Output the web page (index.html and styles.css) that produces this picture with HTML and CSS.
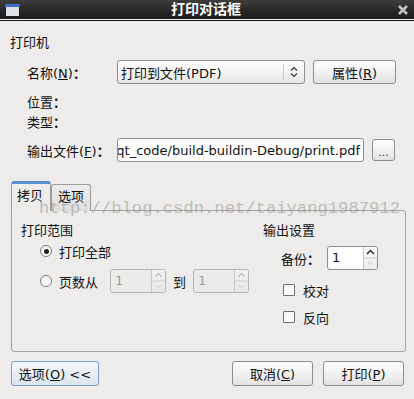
FILE: index.html
```html
<!DOCTYPE html>
<html lang="zh-CN">
<head>
  <meta charset="UTF-8" />
  <title>打印对话框</title>
  <link rel="stylesheet" href="styles.css">
</head>
<body>
  <div class="titlebar">
    <svg class="win-icon" width="15" height="13" viewBox="0 0 15 13">
      <rect x="0.5" y="0.5" width="14" height="12" fill="#dfe3e6" stroke="#1c1c1c"/>
      <rect x="0" y="0" width="15" height="3" fill="#3c6fc8"/>
    </svg>
    <div class="title">打印对话框</div>
    <svg class="close" width="10" height="10" viewBox="0 0 10 10">
      <path d="M1 1 L9 9 M9 1 L1 9" stroke="#c4c4c4" stroke-width="2.6"/>
    </svg>
  </div>
  <div class="title-lines"></div>

  <div class="dialog">
    <div class="section-title">打印机</div>
    <div class="form">
      <div class="row row-name">
        <label class="lbl">名称(<u>N</u>)<span class="colon">：</span></label>
        <div class="combo">
          <span class="combo-text">打印到文件(PDF)</span>
          <span class="combo-arrow">
            <svg width="8" height="12" viewBox="0 0 8 12">
              <polyline points="1,4.5 4,1.5 7,4.5" fill="none" stroke="#333" stroke-width="1.2"/>
              <polyline points="1,7.5 4,10.5 7,7.5" fill="none" stroke="#333" stroke-width="1.2"/>
            </svg>
          </span>
        </div>
        <button class="btn btn-props">属性(<u>R</u>)</button>
      </div>
      <div class="row-info"><span class="lbl">位置<span class="colon">：</span></span></div>
      <div class="row-info"><span class="lbl">类型<span class="colon">：</span></span></div>
      <div class="row row-file">
        <label class="lbl">输出文件(<u>F</u>)<span class="colon">：</span></label>
        <div class="lineedit"><span class="path">qt_code/build-buildin-Debug/print.pdf</span></div>
        <button class="btn btn-browse">...</button>
      </div>
    </div>

    <div class="tabs">
      <div class="tab active">拷贝</div>
      <div class="tab">选项</div>
    </div>
    <div class="panel">
      <div class="watermark">http://blog.csdn.net/taiyang1987912</div>
      <div class="col col-left">
        <div class="group-title">打印范围</div>
        <div class="opt-row first">
          <span class="radio checked"></span>
          <span>打印全部</span>
        </div>
        <div class="opt-row second">
          <span class="radio"></span>
          <span class="range-lbl">页数从</span>
          <div class="spin disabled">
            <span class="spin-val">1</span>
            <span class="spin-btns">
              <svg width="13" height="22" viewBox="0 0 13 22">
                <line x1="0" y1="11" x2="13" y2="11" stroke="#d0d0d0"/>
                <polyline points="3.5,6.5 6.5,3.5 9.5,6.5" fill="none" stroke="#b4b4b4" stroke-width="1.1"/>
                <polyline points="4,15 6.5,17.5 9,15" fill="none" stroke="#c4c4c4" stroke-width="1"/>
              </svg>
            </span>
          </div>
          <span class="to-lbl">到</span>
          <div class="spin disabled">
            <span class="spin-val">1</span>
            <span class="spin-btns">
              <svg width="13" height="22" viewBox="0 0 13 22">
                <line x1="0" y1="11" x2="13" y2="11" stroke="#d0d0d0"/>
                <polyline points="3.5,6.5 6.5,3.5 9.5,6.5" fill="none" stroke="#b4b4b4" stroke-width="1.1"/>
                <polyline points="4,15 6.5,17.5 9,15" fill="none" stroke="#c4c4c4" stroke-width="1"/>
              </svg>
            </span>
          </div>
        </div>
      </div>
      <div class="col col-right">
        <div class="group-title">输出设置</div>
        <div class="copies-row">
          <span>备份<span class="colon">：</span></span>
          <div class="spin copies">
            <span class="spin-val">1</span>
            <span class="spin-btns">
              <svg width="13" height="22" viewBox="0 0 13 22">
                <line x1="0" y1="11" x2="13" y2="11" stroke="#c8c8c8"/>
                <polyline points="3,7 6.5,3.5 10,7" fill="none" stroke="#222" stroke-width="1.4"/>
                <polyline points="4,15 6.5,17.5 9,15" fill="none" stroke="#bdbdbd" stroke-width="1"/>
              </svg>
            </span>
          </div>
        </div>
        <div class="check-row collate">
          <span class="checkbox"></span>
          <span>校对</span>
        </div>
        <div class="check-row reverse">
          <span class="checkbox"></span>
          <span>反向</span>
        </div>
      </div>
    </div>

    <div class="buttons">
      <button class="btn btn-options">选项(<u>O</u>) &lt;&lt;</button>
      <div class="spacer"></div>
      <button class="btn btn-action">取消(<u>C</u>)</button>
      <button class="btn btn-action">打印(<u>P</u>)</button>
    </div>
  </div>
</body>
</html>
```

FILE: styles.css
```css
body {
  margin: 0;
  width: 414px;
  height: 399px;
  overflow: hidden;
  background: #edecea;
  font-family: "DejaVu Sans", "Noto Sans CJK SC", sans-serif;
  font-size: 13px;
  color: #111;
}
.titlebar {
  height: 19px;
  display: flex;
  align-items: center;
  background: linear-gradient(#3d3d3d, #262626 60%, #1b1b1b);
  padding: 0 6px 0 5px;
}
.win-icon {
  display: block;
  margin-top: 1px;
}
.title {
  flex: 1;
  text-align: center;
  color: white;
  font-weight: bold;
  font-size: 14px;
  line-height: 19px;
  margin-right: 6px;
}
.close {
  display: block;
}
.title-lines {
  height: 1px;
  background: #f4f4f4;
  border-bottom: 1px solid #111;
}
.dialog {
  padding: 0 8px 0 10px;
}
.section-title {
  margin-top: 14px;
  line-height: 16px;
}
.form {
  padding-left: 17px;
}
.row {
  display: flex;
  align-items: center;
}
.lbl {
  width: 90px;
  flex: none;
}
.colon {
  font-family: "Noto Sans CJK TC", sans-serif;
  font-weight: bold;
}
.row-name {
  margin-top: 9px;
  height: 24px;
}
.row-info {
  height: 20px;
  line-height: 20px;
}
.row-name + .row-info {
  margin-top: 8px;
}
.row-file {
  margin-top: 6px;
  height: 24px;
}
.btn {
  font: inherit;
  color: #111;
  border: 1px solid #8c8c8c;
  border-radius: 3px;
  background: linear-gradient(#fefefe, #f1f1f1 50%, #e2e2e2);
  padding: 0;
  box-sizing: border-box;
}
.combo {
  width: 188px;
  height: 24px;
  box-sizing: border-box;
  border: 1px solid #8c8c8c;
  border-radius: 3px;
  background: linear-gradient(#fefefe, #f3f3f3 50%, #e6e6e6);
  display: flex;
  align-items: center;
}
.combo-text {
  flex: 1;
  padding-left: 3px;
}
.combo-arrow {
  width: 19px;
  height: 16px;
  border-left: 1px solid #c8c8c8;
  display: flex;
  align-items: center;
  justify-content: center;
  margin-right: 1px;
}
.combo-arrow svg {
  display: block;
}
.btn-props {
  margin-left: 8px;
  width: 83px;
  height: 24px;
}
.lineedit {
  width: 247px;
  height: 24px;
  box-sizing: border-box;
  border: 1px solid #8c8c8c;
  border-radius: 3px;
  background: white;
  overflow: hidden;
  display: flex;
  align-items: center;
  justify-content: flex-end;
  padding-right: 3px;
  white-space: nowrap;
}
.btn-browse {
  margin-left: 8px;
  width: 23px;
  height: 22px;
  font-size: 11px;
  line-height: 22px;
  padding-top: 2px;
  color: #333;
}
.tabs {
  display: flex;
  align-items: flex-end;
  margin-top: 20px;
  margin-left: 1px;
  height: 29px;
  margin-bottom: -1px;
  position: relative;
  z-index: 1;
}
.tab {
  width: 40px;
  box-sizing: border-box;
  height: 27px;
  border: 1px solid #9c9c9c;
  border-bottom: none;
  border-radius: 3px 3px 0 0;
  background: linear-gradient(#ececec, #dedede);
  padding-left: 6px;
  line-height: 24px;
}
.tab.active {
  height: 30px;
  background: #edecea;
  border-top: 3px solid #5a8ed2;
  padding-left: 5px;
}
.panel {
  position: relative;
  margin-left: 1px;
  width: 395px;
  height: 142px;
  box-sizing: border-box;
  border: 1px solid #a2a2a2;
  border-radius: 0 3px 3px 3px;
  display: flex;
  padding: 12px 0 0 9px;
}
.watermark {
  position: absolute;
  left: 27px;
  top: -12px;
  font-family: "Liberation Mono", monospace;
  font-size: 17.2px;
  color: rgba(145, 145, 145, 0.55);
  white-space: nowrap;
  z-index: 2;
  pointer-events: none;
}
.col-left {
  width: 242px;
}
.group-title {
  line-height: 16px;
}
.opt-row {
  display: flex;
  align-items: center;
  padding-left: 19px;
}
.opt-row.first {
  margin-top: 2px;
  height: 20px;
}
.opt-row.second {
  margin-top: 8px;
  height: 24px;
}
.radio {
  width: 12px;
  height: 12px;
  box-sizing: border-box;
  border: 1px solid #7c7c7c;
  border-radius: 50%;
  background: linear-gradient(#f2f2f2, #ffffff);
  margin-right: 7px;
  display: flex;
  align-items: center;
  justify-content: center;
}
.radio.checked::after {
  content: "";
  width: 5px;
  height: 5px;
  border-radius: 50%;
  background: #222;
}
.range-lbl {
  margin-right: 12px;
}
.to-lbl {
  margin: 0 7px;
}
.spin {
  width: 56px;
  height: 24px;
  box-sizing: border-box;
  border: 1px solid #8c8c8c;
  border-radius: 3px;
  background: white;
  display: flex;
}
.spin.disabled {
  background: #ecebe9;
  border-color: #b4b4b4;
  color: #9a9a9a;
}
.spin-val {
  flex: 1;
  padding-left: 4px;
  line-height: 22px;
}
.spin-btns {
  width: 13px;
  border-left: 1px solid #c8c8c8;
  background: linear-gradient(#fbfbfb, #ececec);
  border-radius: 0 2px 2px 0;
}
.spin.disabled .spin-btns {
  background: linear-gradient(#f2f2f2, #e8e8e8);
}
.spin-btns svg {
  display: block;
}
.copies-row {
  display: flex;
  align-items: center;
  padding-left: 18px;
  margin-top: 7px;
  height: 24px;
}
.copies-row > span {
  margin-right: 7px;
}
.spin.copies {
  width: 51px;
}
.check-row {
  display: flex;
  align-items: center;
  padding-left: 20px;
  height: 20px;
}
.check-row.collate {
  margin-top: 10px;
}
.check-row.reverse {
  margin-top: 7px;
}
.checkbox {
  width: 12px;
  height: 12px;
  box-sizing: border-box;
  border: 1px solid #6e6e6e;
  border-radius: 1px;
  background: linear-gradient(#f4f4f4, #ffffff);
  margin-right: 8px;
}
.buttons {
  display: flex;
  margin-top: 9px;
  margin-left: 1px;
  padding-right: 2px;
  height: 25px;
}
.spacer {
  flex: 1;
}
.btn-options {
  width: 88px;
  height: 25px;
  border-color: #7b9ccb;
  background: linear-gradient(#f6f9fc, #e8eef4 50%, #dce4ec);
}
.btn-action {
  width: 81px;
  height: 25px;
  margin-left: 10px;
}
```
